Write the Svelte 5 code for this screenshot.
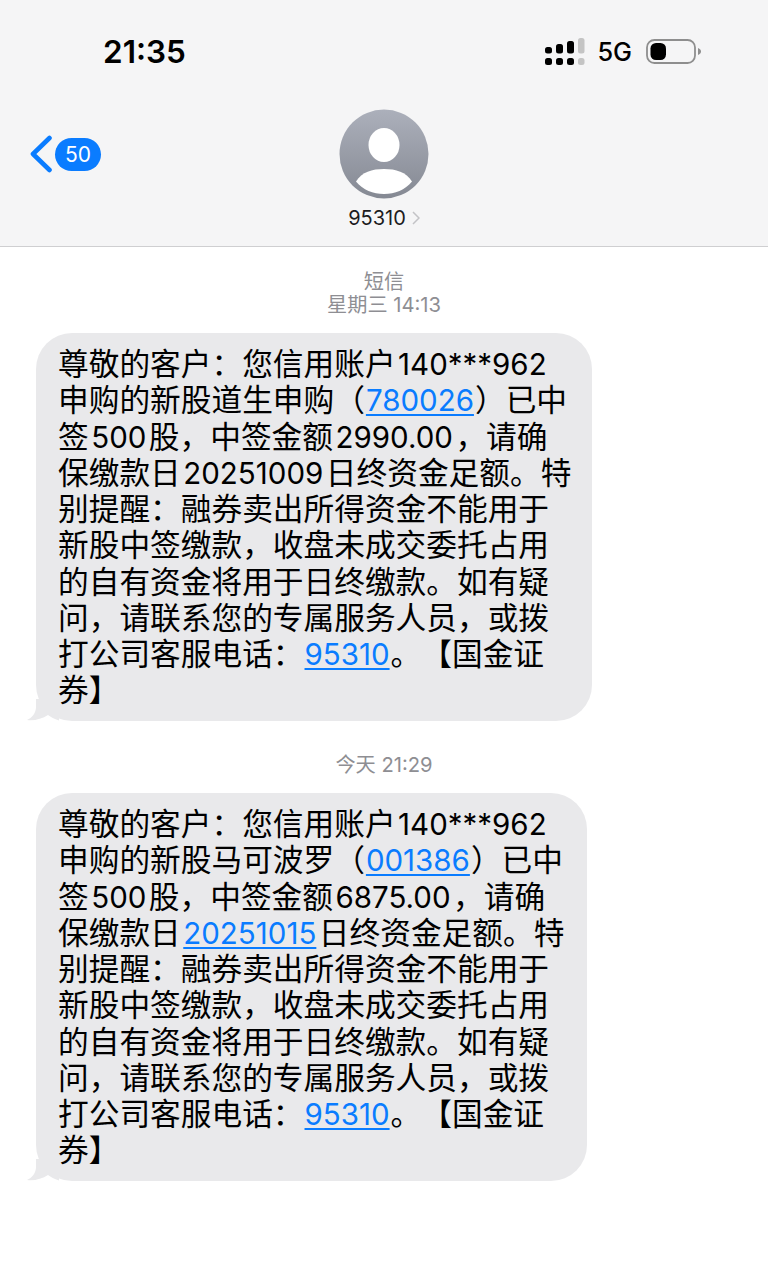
<script>
  const L = (t, spaced = false) => ({ t, link: true, spaced });

  // Splits a run of text so Latin segments can carry their own size and side gaps.
  const segments = (text) =>
    text.split(/([\x21-\x7e]+)/).filter(Boolean).map((s) => ({
      s,
      latin: /^[\x21-\x7e]+$/.test(s)
    }));

  const intro = '尊敬的客户：您信用账户140***962';
  const tail = [
    ['别提醒：融券卖出所得资金不能用于'],
    ['新股中签缴款，收盘未成交委托占用'],
    ['的自有资金将用于日终缴款。如有疑'],
    ['问，请联系您的专属服务人员，或拨'],
    ['打公司客服电话：', L('95310'), '。【国金证'],
    ['券】']
  ];
  const threads = [
    {
      stamp: ['短信', '星期三 14:13'],
      width: 556,
      lines: [
        [intro],
        ['申购的新股道生申购（', L('780026'), '）已中'],
        ['签500股，中签金额2990.00，请确'],
        ['保缴款日20251009日终资金足额。特'],
        ...tail
      ]
    },
    {
      stamp: ['今天 21:29'],
      width: 551,
      lines: [
        [intro],
        ['申购的新股马可波罗（', L('001386'), '）已中'],
        ['签500股，中签金额6875.00，请确'],
        ['保缴款日', L('20251015', true), '日终资金足额。特'],
        ...tail
      ]
    }
  ];
</script>

<div class="screen">
  <header class="top">
    <div class="status">
      <span class="time">21:35</span>
      <div class="indicators">
        <svg class="signal" width="40" height="28" viewBox="0 0 40 28">
          <rect x="0" y="9" width="7" height="6.500" rx="2.500" fill="#000" />
          <rect x="0" y="20" width="7" height="7" rx="2.500" fill="#000" />
          <rect x="11" y="6" width="7" height="9.500" rx="2.500" fill="#000" />
          <rect x="11" y="20" width="7" height="7" rx="2.500" fill="#000" />
          <rect x="22" y="3" width="7" height="12.500" rx="2.500" fill="#000" />
          <rect x="22" y="20" width="7" height="7" rx="2.500" fill="#000" />
          <rect x="33" y="0" width="6.500" height="15.500" rx="2.500" fill="#c4c4c4" />
          <rect x="33" y="20" width="6.500" height="7" rx="2.500" fill="#c4c4c4" />
        </svg>
        <span class="net">5G</span>
        <svg class="battery" width="56" height="26" viewBox="0 0 56 26">
          <rect x="1" y="1" width="48" height="23" rx="7.500" fill="none" stroke="#8e8e8e" stroke-width="1.800" />
          <rect x="4.500" y="4" width="15.500" height="17" rx="5.500" fill="#000" />
          <path d="M52 9c2 .8 3 2 3 3.500s-1 2.700-3 3.500z" fill="#8e8e8e" />
        </svg>
      </div>
    </div>
    <div class="nav">
      <div class="back">
        <svg width="24" height="38" viewBox="0 0 24 38">
          <path d="M20.500 3 4 19l16.500 16" fill="none" stroke="#0a7cff" stroke-width="4.600" stroke-linecap="round" stroke-linejoin="round" />
        </svg>
        <span class="badge">50</span>
      </div>
      <div class="contact">
        <svg class="avatar" width="90" height="90" viewBox="0 0 90 90">
          <defs>
            <linearGradient id="face" x1="0" y1="0" x2="0" y2="1">
              <stop offset="0" stop-color="#acb0bb" />
              <stop offset="1" stop-color="#858993" />
            </linearGradient>
            <clipPath id="disc"><circle cx="45" cy="45" r="44.500" /></clipPath>
          </defs>
          <circle cx="45" cy="45" r="44.500" fill="url(#face)" />
          <ellipse cx="45" cy="36" rx="15.500" ry="17" fill="#fff" />
          <path d="M17 72.500C23 63 33 60 45 60s22 3 28 12.500C66 81 56 85 45 85s-21-4-28-12.500z" fill="#fff" clip-path="url(#disc)" />
        </svg>
        <div class="name">
          <span>95310</span>
          <svg width="8" height="14" viewBox="0 0 8 14">
            <path d="m1 1 6 6-6 6" fill="none" stroke="#c3c3c6" stroke-width="1.500" />
          </svg>
        </div>
      </div>
    </div>
  </header>

  <main class="log">
    {#each threads as thread}
      <div class="stamp">
        {#each thread.stamp as row}
          <div>{row}</div>
        {/each}
      </div>
      <div class="bubble" style="width: {thread.width}px">
        {#each thread.lines as line}
          <div class="line">
            {#each line as part}
              {#if typeof part === 'string'}
                {#each segments(part) as seg}
                  {#if seg.latin}<span class="latin">{seg.s}</span>{:else}{seg.s}{/if}
                {/each}
              {:else}
                <a class:spaced={part.spaced} href="#top">{part.t}</a>
              {/if}
            {/each}
          </div>
        {/each}
        <svg class="tail" width="34" height="22" viewBox="0 0 34 22">
          <path d="M9 0v8C9 14 5 19 0 21c7 1 15-1 21-5 3 2 6 4 11 5.500V0z" fill="#e9e9eb" />
        </svg>
      </div>
    {/each}
  </main>
</div>

<style>
  :global(body) {
    margin: 0;
    background: #fff;
  }

  .screen {
    width: 768px;
    height: 1275px;
    overflow: hidden;
    font-family: Inter, "Liberation Sans", "Noto Sans CJK SC", sans-serif;
    color: #000;
  }

  .top {
    height: 246px;
    background: #f5f5f6;
    border-bottom: 1px solid #cfcfd1;
    display: flex;
    flex-direction: column;
  }

  .status {
    height: 109px;
    box-sizing: border-box;
    padding: 32px 66px 0 103px;
    display: flex;
    justify-content: space-between;
    align-items: flex-start;
  }

  .time {
    font-size: 31.5px;
    font-weight: 600;
    line-height: 40px;
  }

  .indicators {
    display: flex;
    align-items: center;
    height: 40px;
  }

  .net {
    font-size: 25.3px;
    font-weight: 500;
    line-height: 40px;
    margin: 0 14px 0 12px;
  }

  .nav {
    display: grid;
    grid-template-columns: 1fr auto 1fr;
    align-items: start;
  }

  .back {
    display: flex;
    align-items: center;
    padding: 26px 0 0 29px;
  }

  .badge {
    width: 46px;
    height: 33px;
    margin-left: 2px;
    border-radius: 17px;
    background: #0a7cff;
    color: #fff;
    font-size: 21px;
    line-height: 33px;
    text-align: center;
  }

  .contact {
    display: flex;
    flex-direction: column;
    align-items: center;
  }

  .avatar {
    display: block;
  }

  .name {
    display: flex;
    align-items: center;
    gap: 6px;
    margin: 6px 0 0 0;
    font-size: 20px;
    line-height: 26px;
    color: #1c1c1e;
  }

  .log {
    display: flex;
    flex-direction: column;
    align-items: flex-start;
    padding: 0 0 0 36px;
  }

  .stamp {
    width: 696px;
    padding-top: 23px;
    text-align: center;
    font-size: 20.2px;
    line-height: 23px;
    color: #8e8e93;
    margin-bottom: 17px;
  }

  .bubble + .stamp {
    padding-top: 32px;
  }

  .bubble {
    position: relative;
    box-sizing: border-box;
    height: 388px;
    padding: 13px 0 0 22px;
    border-radius: 36px;
    background: #e9e9eb;
  }

  .line {
    height: 36.25px;
    line-height: 36.25px;
    white-space: pre;
    font-family: Inter, "Noto Sans CJK SC", sans-serif;
    font-size: 30.7px;
    text-spacing-trim: space-all;
  }

  .latin {
    font-size: 29.5px;
    margin: 0 2.500px;
  }

  .line a {
    font-size: 29.5px;
    margin: 0 1px;
    color: #0a7cff;
    text-decoration: underline;
    text-decoration-thickness: 2px;
    text-underline-offset: 3px;
  }

  .line a.spaced {
    margin: 0 2.500px;
  }

  .tail {
    position: absolute;
    left: -9px;
    bottom: 0;
  }
</style>
